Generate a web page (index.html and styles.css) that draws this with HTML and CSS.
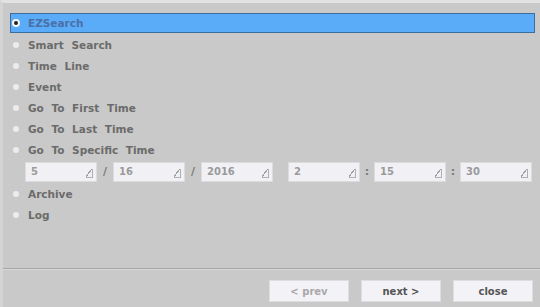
FILE: index.html
```html
<!DOCTYPE html>
<html>
<head>
  <title>Search</title>
  <link rel="stylesheet" href="styles.css">
</head>
<body>
  <div class="window">
    <div class="menu-list">
      <div class="menu-item selected"><span class="radio checked"></span>EZSearch</div>
      <div class="menu-item"><span class="radio"></span>Smart Search</div>
      <div class="menu-item"><span class="radio"></span>Time Line</div>
      <div class="menu-item"><span class="radio"></span>Event</div>
      <div class="menu-item"><span class="radio"></span>Go To First Time</div>
      <div class="menu-item"><span class="radio"></span>Go To Last Time</div>
      <div class="menu-item"><span class="radio"></span>Go To Specific Time</div>
      <div class="time-row">
        <div class="field">5<span class="grip"></span></div>
        <span class="sep">/</span>
        <div class="field">16<span class="grip"></span></div>
        <span class="sep">/</span>
        <div class="field">2016<span class="grip"></span></div>
        <span class="gap"></span>
        <div class="field">2<span class="grip"></span></div>
        <span class="sep colon">:</span>
        <div class="field">15<span class="grip"></span></div>
        <span class="sep colon">:</span>
        <div class="field">30<span class="grip"></span></div>
      </div>
      <div class="menu-item"><span class="radio"></span>Archive</div>
      <div class="menu-item"><span class="radio"></span>Log</div>
    </div>

    <div class="footer">
      <button class="btn disabled">&lt; prev</button>
      <button class="btn">next &gt;</button>
      <button class="btn">close</button>
    </div>
  </div>
</body>
</html>
```

FILE: styles.css
```css
body {
  margin: 0;
  background-color: #c9c9c9;
  font-family: "DejaVu Sans", Verdana, sans-serif;
}

.window {
  width: 540px;
  height: 307px;
  box-sizing: border-box;
  border-top: 3px solid #e2e2e2;
  border-left: 3px solid #d4d4d4;
  display: flex;
  flex-direction: column;
}

.menu-list {
  height: 266px;
  box-sizing: border-box;
  padding: 10px 5px 0 7px;
  border-bottom: 1px solid #a6a6a6;
}

.menu-item {
  height: 21px;
  display: flex;
  align-items: center;
  font-size: 10.5px;
  font-weight: bold;
  color: #6b6b6b;
  word-spacing: 4px;
  box-sizing: border-box;
  border: 1px solid transparent;
}

.menu-item.selected {
  height: 20px;
  margin-bottom: 1px;
  background-color: #5aabf8;
  border: 1px solid #3d6d9c;
  color: #4a70a6;
}

.radio {
  width: 6px;
  height: 6px;
  border-radius: 50%;
  background-color: #ececec;
  margin: 0 9px 0 2px;
}

.radio.checked {
  width: 4px;
  height: 4px;
  background-color: #222;
  border: 2px solid #f4f4f4;
  margin: 0 8px 0 1px;
}

.time-row {
  height: 23px;
  display: flex;
  align-items: center;
  padding-left: 15px;
}

.field {
  position: relative;
  width: 72px;
  height: 20px;
  box-sizing: border-box;
  background-color: #f1f1f5;
  border: 1px solid #dcdcdc;
  font-size: 10px;
  font-weight: bold;
  color: #9a9a9a;
  line-height: 18px;
  padding-left: 5px;
}

.grip {
  position: absolute;
  right: 3px;
  bottom: 3px;
  width: 7px;
  height: 9px;
  border-right: 1px solid #b0b0b0;
  border-bottom: 1px solid #b0b0b0;
  background: linear-gradient(to top left, transparent 45%, #a0a0a0 45%, #a0a0a0 58%, transparent 58%);
  box-sizing: border-box;
}

.sep {
  width: 16px;
  text-align: center;
  font-size: 11px;
  font-weight: bold;
  color: #7a7a7a;
}

.sep.colon {
  width: 14px;
}

.gap {
  width: 15px;
}

.footer {
  flex: 1;
  border-top: 1px solid #d9d9d9;
  display: flex;
  justify-content: flex-end;
  align-items: flex-start;
  gap: 12px;
  padding: 10px 7px 0 0;
}

.btn {
  width: 80px;
  height: 22px;
  background-color: #f3f3f7;
  border: 1px solid #dedede;
  font-family: "DejaVu Sans", Verdana, sans-serif;
  font-size: 10px;
  font-weight: bold;
  color: #555;
  padding: 0;
}

.btn.disabled {
  color: #a8a8a8;
}
```
